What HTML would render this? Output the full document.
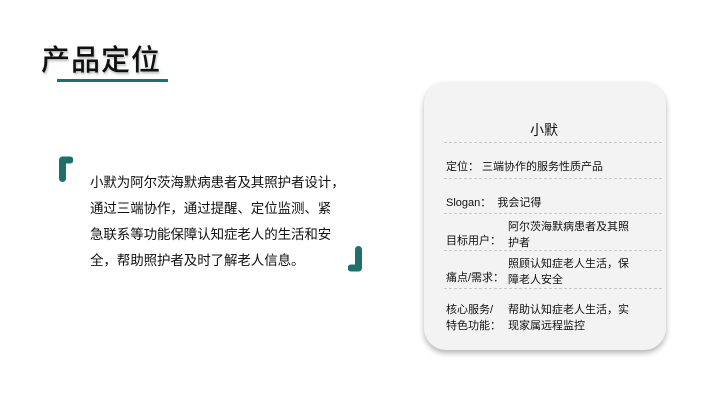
<!DOCTYPE html>
<html><head><meta charset="utf-8"><style>
*{margin:0;padding:0;box-sizing:border-box}
body{width:720px;height:405px;background:#fff;position:relative;overflow:hidden;font-family:"Liberation Sans","Noto Sans CJK SC",sans-serif;color:#111}
.a{position:absolute;white-space:nowrap}
.t{left:41px;top:37px;font-size:29px;font-weight:500;letter-spacing:1px;text-shadow:1px 2px 2px rgba(0,0,0,.25)}
.ul{left:57px;top:79px;width:111px;height:3px;background:#1f6f6c}
.br{position:absolute;width:14px;height:26px}
.p{left:90px;top:170px;font-size:13.5px;line-height:26px;letter-spacing:-0.1px}
.card{position:absolute;left:424px;top:82px;width:242px;height:268px;background:#f3f3f3;border-radius:22px;box-shadow:0 3px 6px rgba(0,0,0,.3)}
.d{position:absolute;left:20px;width:218px;border-top:1px dashed #c8c8c8}
.c{position:absolute;font-size:11px;line-height:16px;white-space:nowrap}
</style></head><body>
<div class="a t">产品定位</div>
<div class="a ul"></div>
<svg class="br" style="left:59px;top:156px" viewBox="0 0 14 26"><path d="M3.5 22.5V4H11" stroke="#1f6f6c" stroke-width="7" fill="none" stroke-linecap="round" stroke-linejoin="round"/></svg>
<svg class="br" style="left:348px;top:246px" viewBox="0 0 14 26"><path d="M10.5 3.5V22H3" stroke="#1f6f6c" stroke-width="7" fill="none" stroke-linecap="round" stroke-linejoin="round"/></svg>
<div class="a p">小默为阿尔茨海默病患者及其照护者设计，<br>通过三端协作，通过提醒、定位监测、紧<br>急联系等功能保障认知症老人的生活和安<br>全，帮助照护者及时了解老人信息。</div>
<div class="card">
<div class="c" style="left:106px;top:38px;font-size:14px;line-height:20px">小默</div>
<div class="d" style="top:60px"></div>
<div class="c" style="left:22px;top:77px">定位：&nbsp;三端协作的服务性质产品</div>
<div class="d" style="top:96px"></div>
<div class="c" style="left:22px;top:113px">Slogan：&nbsp;&nbsp;我会记得</div>
<div class="d" style="top:131px"></div>
<div class="c" style="left:22px;top:151px">目标用户：</div>
<div class="c" style="left:84px;top:137px">阿尔茨海默病患者及其照<br>护者</div>
<div class="d" style="top:168px"></div>
<div class="c" style="left:22px;top:188px">痛点/需求：</div>
<div class="c" style="left:84px;top:174px">照顾认知症老人生活，保<br>障老人安全</div>
<div class="d" style="top:206px"></div>
<div class="c" style="left:22px;top:220px">核心服务/<br>特色功能：</div>
<div class="c" style="left:84px;top:220px">帮助认知症老人生活，实<br>现家属远程监控</div>
</div>
</body></html>
